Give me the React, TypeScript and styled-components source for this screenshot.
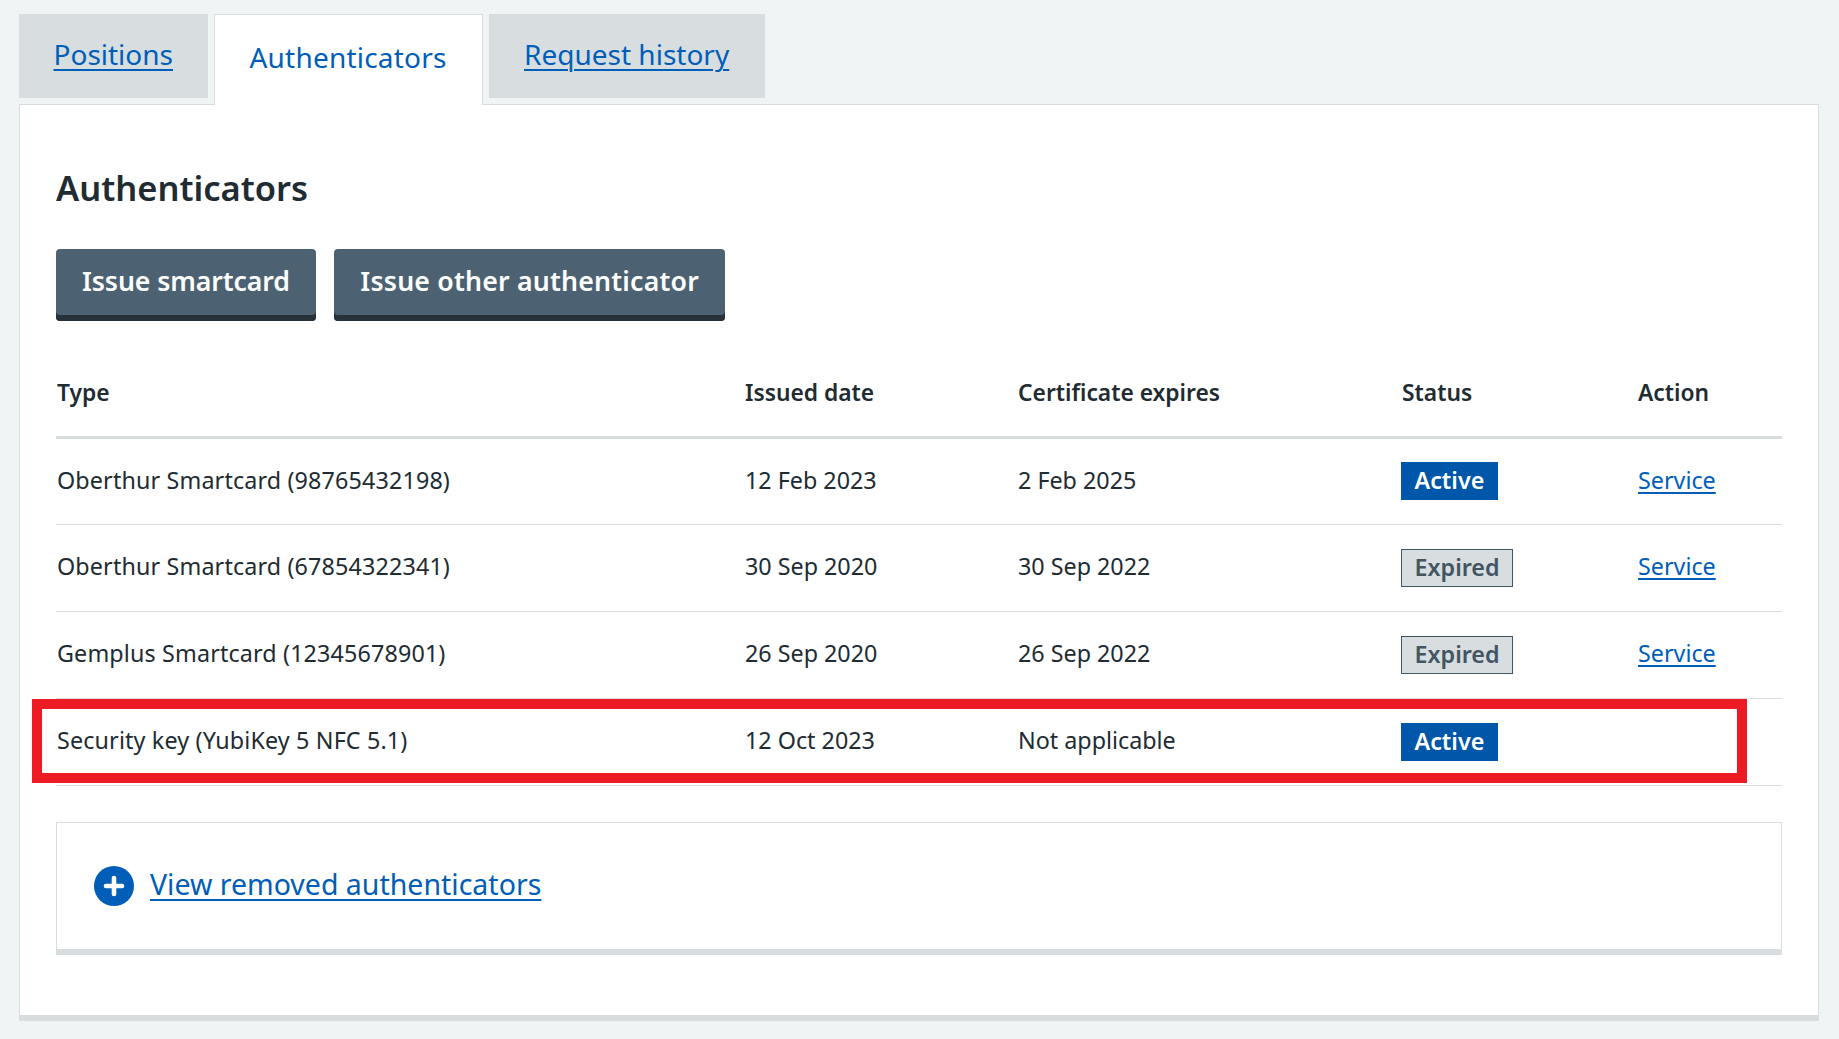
import styled, { createGlobalStyle } from "styled-components";

const GlobalStyle = createGlobalStyle`
  html, body {
    margin: 0;
    padding: 0;
    background: #f0f4f5;
    color: #212b32;
    font-family: "Noto Sans", "Open Sans", sans-serif;
  }
`;

const Page = styled.div`
  width: 1839px;
  height: 1039px;
  padding: 14px 20px 0 19px;
  box-sizing: border-box;
  overflow: hidden;
`;

const TabList = styled.div`
  display: flex;
  gap: 6px;
  align-items: flex-start;
  height: 91px;
  position: relative;
  z-index: 1;
`;

const Tab = styled.div<{ $active?: boolean; $inset: number }>`
  display: flex;
  align-items: center;
  box-sizing: border-box;
  height: ${(p) => (p.$active ? "91px" : "84px")};
  padding: 0 ${(p) => p.$inset}px ${(p) => (p.$active ? "6px" : "4px")};
  font-size: 28px;
  letter-spacing: ${(p) => (p.$active ? "0.2px" : "0")};
  color: #005eb8;
  background: ${(p) => (p.$active ? "#ffffff" : "#d8dde0")};
  border: ${(p) => (p.$active ? "1px solid #d8dde0" : "none")};
  border-bottom: none;
`;

const TabLink = styled.a`
  color: #005eb8;
  text-decoration: underline;
  text-decoration-thickness: 2px;
  text-underline-offset: 4px;
`;

const Panel = styled.section`
  box-sizing: border-box;
  height: 917px;
  margin-top: -1px;
  padding: 60px 36px 0 36px;
  background: #ffffff;
  border: 1px solid #d8dde0;
  border-bottom: 6px solid #d8dde0;
`;

const Heading = styled.h2`
  margin: 0;
  font-size: 34.5px;
  line-height: 46px;
  font-weight: 600;
  color: #212b32;
`;

const ButtonRow = styled.div`
  display: flex;
  gap: 18.5px;
  margin-top: 38px;
`;

const Button = styled.button<{ $tracking: number }>`
  height: 72px;
  padding: 0 26px 10px;
  box-sizing: border-box;
  border: none;
  border-radius: 4px;
  background: #4c6272;
  box-shadow: inset 0 -6px 0 #263139;
  color: #ffffff;
  font-family: inherit;
  font-size: 26.7px;
  font-weight: 600;
  letter-spacing: ${(p) => p.$tracking}px;
`;

const Table = styled.table`
  width: 1726px;
  margin-top: 26px;
  border-collapse: collapse;
  table-layout: fixed;
  font-size: 23.3px;
`;

const HeadCell = styled.th<{ $width: number }>`
  width: ${(p) => p.$width}px;
  height: 90px;
  padding: 2px 0 0 1px;
  box-sizing: border-box;
  text-align: left;
  font-size: 22.8px;
  font-weight: 600;
  border-bottom: 3px solid #d8dde0;
`;

const Row = styled.tr`
  height: 87px;
  border-bottom: 1px solid #d8dde0;
`;

const Cell = styled.td`
  padding: 0 0 3px 1px;
  position: relative;
`;

const TypeCell = styled(Cell)`
  letter-spacing: 0.15px;
`;

const TagCell = styled.td`
  padding: 0;
`;

const Tag = styled.span<{ $expired?: boolean }>`
  display: block;
  width: fit-content;
  box-sizing: border-box;
  height: 38px;
  line-height: 35px;
  padding: 0 12.5px;
  font-size: 23.3px;
  font-weight: 600;
  color: ${(p) => (p.$expired ? "#425563" : "#ffffff")};
  background: ${(p) => (p.$expired ? "#d8dde0" : "#0056a9")};
  border: 1px solid ${(p) => (p.$expired ? "#425563" : "#0056a9")};
`;

const Highlight = styled.div`
  position: absolute;
  left: -24px;
  top: 0;
  width: 1715px;
  height: 84px;
  box-sizing: border-box;
  border: 10px solid #ed1c24;
  pointer-events: none;
`;

const ServiceLink = styled(TabLink)`
  text-underline-offset: 3px;
`;

const Details = styled.div`
  display: flex;
  align-items: center;
  gap: 16px;
  box-sizing: border-box;
  width: 1726px;
  height: 133px;
  margin-top: 36px;
  padding: 0 37px;
  border: 1px solid #d8dde0;
  border-bottom: 6px solid #d8dde0;
`;

const DetailsLink = styled(TabLink)`
  font-size: 28.5px;
  margin-bottom: 3px;
`;

const PlusIcon = () => (
  <svg width="40" height="40" viewBox="0 0 40 40" aria-hidden="true">
    <circle cx="20" cy="20" r="20" fill="#005eb8" />
    <path d="M20 12v16M12 20h16" stroke="#ffffff" strokeWidth="4.6" strokeLinecap="round" />
  </svg>
);

interface Authenticator {
  type: string;
  issued: string;
  expires: string;
  expired: boolean;
  service: boolean;
}

const rows: Authenticator[] = [
  { type: "Oberthur Smartcard (98765432198)", issued: "12 Feb 2023", expires: "2 Feb 2025", expired: false, service: true },
  { type: "Oberthur Smartcard (67854322341)", issued: "30 Sep 2020", expires: "30 Sep 2022", expired: true, service: true },
  { type: "Gemplus Smartcard (12345678901)", issued: "26 Sep 2020", expires: "26 Sep 2022", expired: true, service: true },
  { type: "Security key (YubiKey 5 NFC 5.1)", issued: "12 Oct 2023", expires: "Not applicable", expired: false, service: false },
];

const App = () => {
  return (
    <Page>
      <GlobalStyle />
      <TabList>
        <Tab $inset={34.5}><TabLink>Positions</TabLink></Tab>
        <Tab $active $inset={35}>Authenticators</Tab>
        <Tab $inset={35.5}><TabLink>Request history</TabLink></Tab>
      </TabList>
      <Panel>
        <Heading>Authenticators</Heading>
        <ButtonRow>
          <Button $tracking={-0.1}>Issue smartcard</Button>
          <Button $tracking={0.2}>Issue other authenticator</Button>
        </ButtonRow>
        <Table>
          <thead>
            <tr>
              <HeadCell $width={688}>Type</HeadCell>
              <HeadCell $width={273}>Issued date</HeadCell>
              <HeadCell $width={384}>Certificate expires</HeadCell>
              <HeadCell $width={236}>Status</HeadCell>
              <HeadCell $width={145}>Action</HeadCell>
            </tr>
          </thead>
          <tbody>
            {rows.map((row) => (
              <Row key={row.type}>
                <TypeCell>
                  {!row.service && <Highlight />}
                  {row.type}
                </TypeCell>
                <Cell>{row.issued}</Cell>
                <Cell>{row.expires}</Cell>
                <TagCell>
                  <Tag $expired={row.expired}>{row.expired ? "Expired" : "Active"}</Tag>
                </TagCell>
                <Cell>{row.service && <ServiceLink>Service</ServiceLink>}</Cell>
              </Row>
            ))}
          </tbody>
        </Table>
        <Details>
          <PlusIcon />
          <DetailsLink>View removed authenticators</DetailsLink>
        </Details>
      </Panel>
    </Page>
  );
};

export default App;
